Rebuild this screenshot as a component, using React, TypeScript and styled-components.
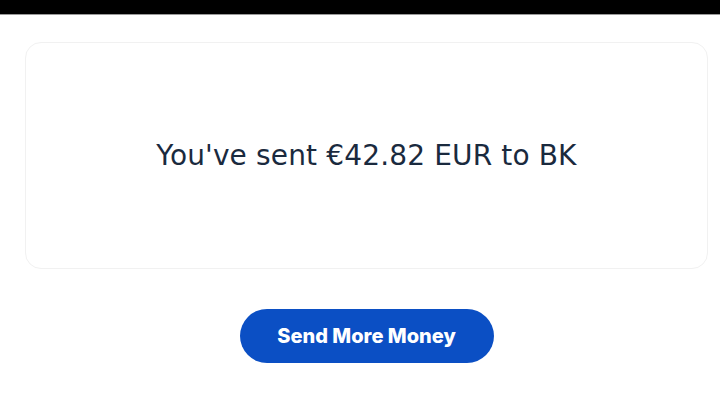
import React from "react";
import styled, { createGlobalStyle } from "styled-components";

const GlobalStyle = createGlobalStyle`
    html, body {
        margin: 0;
        padding: 0;
        background: #ffffff;
        font-family: "Liberation Sans", Arial, sans-serif;
    }
`;

const Page = styled.div`
    width: 720px;
    height: 420px;
    display: flex;
    flex-direction: column;
    background: #ffffff;
    overflow: hidden;
`;

const TopBar = styled.div`
    height: 14px;
    background: #000000;
    border-bottom: 1px solid #9a9a9a;
    flex-shrink: 0;
`;

const Content = styled.main`
    display: flex;
    flex-direction: column;
    align-items: center;
    padding: 27px 12px 0 25px;
`;

const Card = styled.section`
    box-sizing: border-box;
    width: 100%;
    height: 227px;
    border: 1.5px solid #f1f1f1;
    border-radius: 16px;
    display: flex;
    align-items: center;
    justify-content: center;
`;

const Message = styled.p`
    margin: 0;
    font-family: "DejaVu Sans", "Liberation Sans", Arial, sans-serif;
    font-size: 28px;
    color: #1a2a3e;
    letter-spacing: 0.15px;
`;

const Button = styled.button`
    margin-top: 40px;
    width: 254px;
    height: 54px;
    border: none;
    border-radius: 27px;
    background: #0b4fc4;
    color: #ffffff;
    font-family: Inter, "Liberation Sans", Arial, sans-serif;
    font-weight: 800;
    font-size: 20px;
    cursor: pointer;
`;

export default function App() {
    return (
        <Page>
            <GlobalStyle />
            <TopBar />
            <Content>
                <Card>
                    <Message>You've sent €42.82 EUR to BK</Message>
                </Card>
                <Button>Send More Money</Button>
            </Content>
        </Page>
    );
}
